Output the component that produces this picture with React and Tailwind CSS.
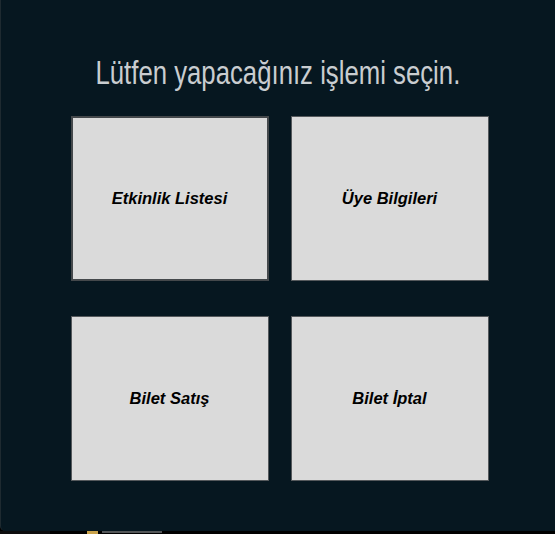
export default function App() {
  const boxes = ["Etkinlik Listesi", "Üye Bilgileri", "Bilet Satış", "Bilet İptal"];
  return (
    <div className="w-[555px] h-[534px] bg-black relative overflow-hidden">
      <div className="w-[555px] h-[531px] bg-[#061720] rounded-bl-[5px] border-l border-[#1e2a30] flex flex-col items-center">
        <h1
          className="mt-[52px] h-[42px] text-[33px] leading-[42px] text-[#c9cdd0] whitespace-nowrap scale-x-[0.78]"
          style={{ fontFamily: '"Liberation Sans", Arial, sans-serif' }}
        >
          Lütfen yapacağınız işlemi seçin.
        </h1>
        <div className="mt-[22px] ml-[3px] grid grid-cols-[198px_198px] gap-x-[22px] gap-y-[35px]">
          {boxes.map((b, i) => (
            <div
              key={b}
              className={`h-[165px] flex items-center justify-center bg-[#dadada] ${i === 0 ? "border-2 border-[#44484b]" : "border border-[#55595c]"}`}
            >
              <span className="text-[16.5px] font-bold italic text-black" style={{ fontFamily: '"Liberation Sans", Arial, sans-serif' }}>{b}</span>
            </div>
          ))}
        </div>
      </div>
      <div className="h-[3px] flex items-start">
        <div className="w-[50px] h-[3px] bg-[#0d0d0d]" />
        <div className="ml-[37px] w-[11px] h-[3px] bg-[#c9a24a]" />
        <div className="ml-[4px] w-[60px] h-[2px] bg-[#8a8f92] opacity-60" />
      </div>
    </div>
  );
}
